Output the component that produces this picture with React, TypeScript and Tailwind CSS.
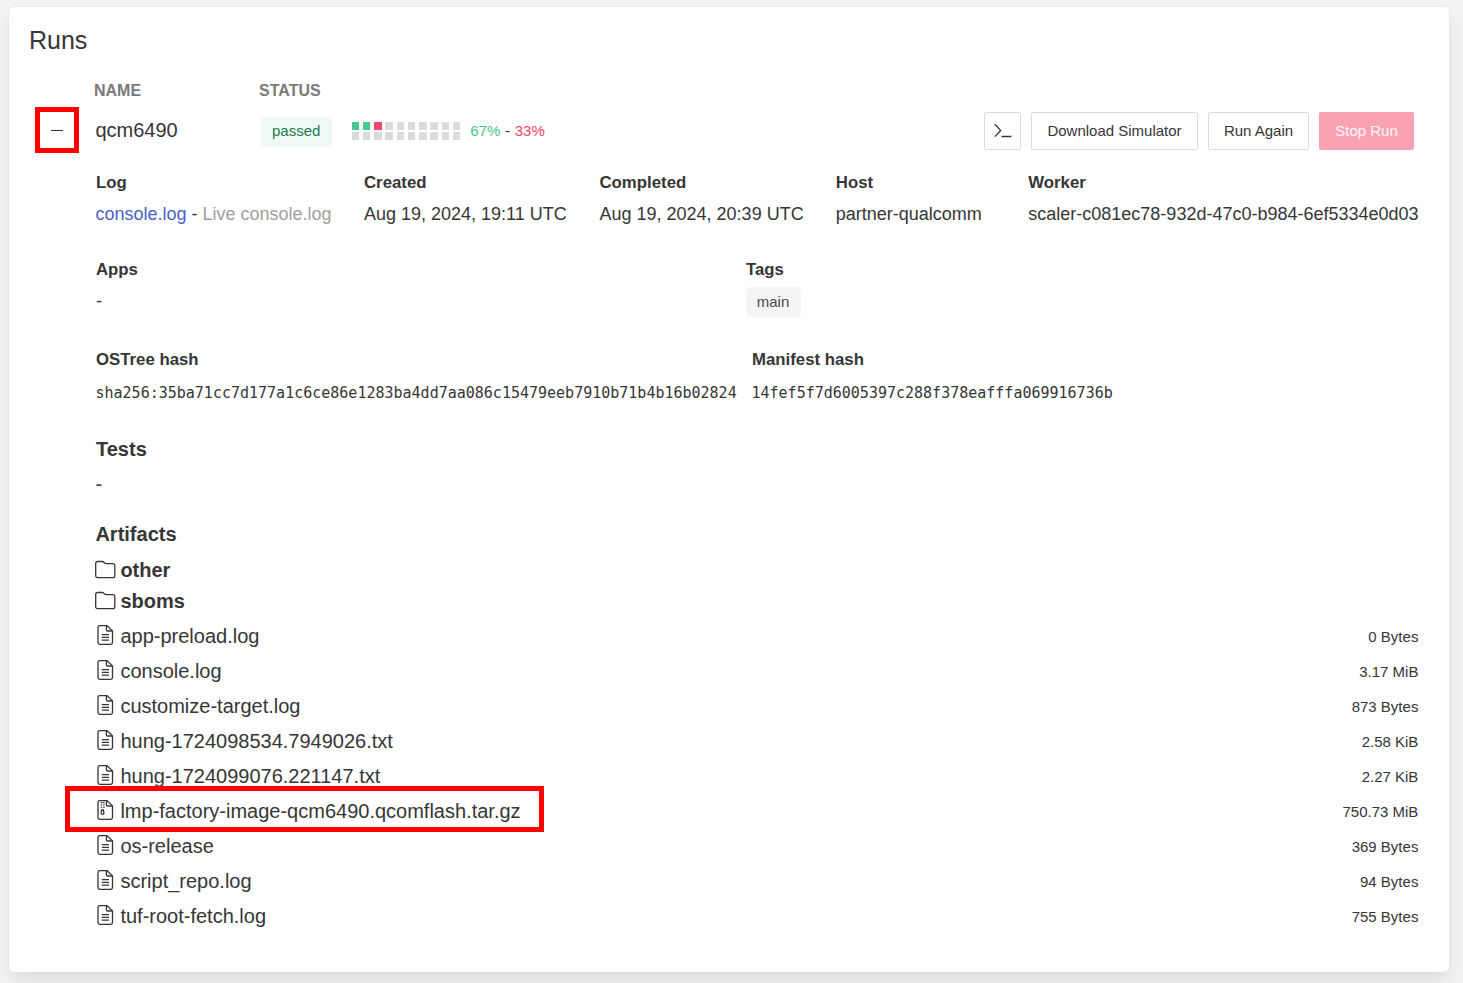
import React from "react";

const files = [
  { name: "app-preload.log", size: "0 Bytes" },
  { name: "console.log", size: "3.17 MiB" },
  { name: "customize-target.log", size: "873 Bytes" },
  { name: "hung-1724098534.7949026.txt", size: "2.58 KiB" },
  { name: "hung-1724099076.221147.txt", size: "2.27 KiB" },
  { name: "lmp-factory-image-qcm6490.qcomflash.tar.gz", size: "750.73 MiB", archive: true },
  { name: "os-release", size: "369 Bytes" },
  { name: "script_repo.log", size: "94 Bytes" },
  { name: "tuf-root-fetch.log", size: "755 Bytes" },
];

const cells = [
  "bg-[#48c78e]", "bg-[#48c78e]", "bg-[#f14668]",
  ...Array.from({ length: 17 }, () => "bg-[#dbdbdb]"),
];

function FolderIcon() {
  return (
    <svg className="block h-5 w-[21px] shrink-0" viewBox="0 0 21 20" fill="none" stroke="#363636" strokeWidth="1.3" strokeLinejoin="round">
      <path d="M.7 3.4a1.9 1.9 0 0 1 1.9-1.9h4.5c.7 0 1.2.2 1.7.7l.9.8c.5.4 1 .6 1.6.6h6.5a2 2 0 0 1 2 2v10.1a1.9 1.9 0 0 1-1.9 1.9H2.6a1.9 1.9 0 0 1-1.9-1.9z" />
    </svg>
  );
}

function FileIcon({ archive }: { archive?: boolean }) {
  return (
    <svg className="mb-px block h-5 w-[21px] shrink-0" viewBox="0 0 21 20" fill="none" stroke="#363636" strokeWidth="1.3" strokeLinejoin="round">
      <path d="M12.1.7H4.8A1.8 1.8 0 0 0 3 2.5v15a1.8 1.8 0 0 0 1.8 1.8h10.9a1.8 1.8 0 0 0 1.8-1.8V5.9z" />
      <path d="M11.4.8v3.9c0 .8.5 1.3 1.3 1.3h4.6" />
      {archive ? (
        <>
          <path d="M5.6 2.8h4M5.6 5h1.6M8 5h1.8M5.6 7.2h1.6M8 7.2h1.8" strokeWidth="1.1" />
          <path d="M6.7 10h1.6l.6 3a1.1 1.1 0 0 1-1.1 1.3h-.6A1.1 1.1 0 0 1 6.1 13z" />
        </>
      ) : (
        <path d="M6.8 9.6h7.2M6.8 12.4h7.2M6.8 15.2h7.2" />
      )}
    </svg>
  );
}

function Field({ label, className, children }: { label: string; className: string; children: React.ReactNode }) {
  return (
    <div className={"shrink-0 " + className}>
      <div className="h-8 pt-px text-[16.8px] leading-8 font-bold">{label}</div>
      {children}
    </div>
  );
}

export default function App() {
  return (
    <div className="h-[983px] overflow-hidden bg-[#f3f3f3] pt-[7px] pl-[9px] font-['Liberation_Sans',Arial,sans-serif] whitespace-nowrap text-[#363636]">
      <main className="h-[965px] w-[1440px] rounded-[5px] bg-white pt-[13px] pr-[31px] pl-5 shadow-[0_10px_20px_-2px_rgba(10,10,10,0.1),0_0_0_1px_rgba(10,10,10,0.02)]">
        <h1 className="h-14 text-[25px] leading-10">Runs</h1>
        <div className="flex h-[29px] pl-[65px] text-[16px] leading-[30px] font-bold text-[#7a7a7a]">
          <div className="w-[165px]">NAME</div>
          <div>STATUS</div>
        </div>

        <div className="flex h-[52px] items-center pl-[6px]">
          <button className="mr-4 mb-[2px] flex h-[46px] w-11 items-center justify-center border-[5px] border-[#ff0000]">
            <span className="h-px w-3 bg-[#363636]" />
          </button>
          <div className="mb-[2px] w-[166px] text-[20px]"><span className="pl-[0.4px]">qcm6490</span></div>
          <div className="mt-px flex h-[30px] w-[71px] items-center justify-center rounded-[4px] bg-[#effaf5] pr-[0.6px] pb-px text-[15px] text-[#257953]">passed</div>
          <div className="ml-[19.6px] grid grid-cols-10 gap-x-[3.75px] gap-y-[2px]">
            {cells.map((c, i) => (
              <span key={i} className={"h-2 w-[7.5px] " + c} />
            ))}
          </div>
          <div className="ml-[10px] text-[15px] [word-spacing:0.5px]">
            <span className="text-[#48c78e]">67%</span> - <span className="text-[#f14668]">33%</span>
          </div>
          <div className="mr-1 ml-auto flex gap-[10px] text-[15px]">
            <button className="flex h-[38px] w-[37px] items-center justify-center rounded-[2px] border border-[#dbdbdb]">
              <svg className="h-4 w-5" viewBox="0 0 20 16" fill="none" stroke="#363636" strokeWidth="1.4">
                <path d="M1.9 1.2l5.7 6.2-5.7 6.2M8.6 13.5h9.8" />
              </svg>
            </button>
            <button className="h-[38px] w-[167px] rounded-[2px] border border-[#dbdbdb]">Download Simulator</button>
            <button className="h-[38px] w-[101px] rounded-[2px] border border-[#dbdbdb]">Run Again</button>
            <button className="h-[38px] w-[95px] rounded-[2px] bg-[#f9a2b3] text-white/90">Stop Run</button>
          </div>
        </div>

        <div className="pl-[67px]">
          <div className="flex h-[87px] pt-[9px] text-[18px] leading-8">
            <Field label="Log" className="w-[268px]">
              <div className="-ml-[0.6px]">
                <span className="text-[#485fc7]">console.log</span> - <span className="text-[#a0a0a0]">Live console.log</span>
              </div>
            </Field>
            <Field label="Created" className="w-[235.5px]">Aug 19, 2024, 19:11 UTC</Field>
            <Field label="Completed" className="w-[236.3px]">Aug 19, 2024, 20:39 UTC</Field>
            <Field label="Host" className="w-[192.5px]">partner-qualcomm</Field>
            <Field label="Worker" className="">scaler-c081ec78-932d-47c0-b984-6ef5334e0d03</Field>
          </div>

          <div className="flex h-[90px] pt-[9px] text-[18px] leading-8">
            <Field label="Apps" className="w-[650px]">-</Field>
            <Field label="Tags" className="">
              <div className="mt-[2px] flex h-[30px] w-[55px] items-center justify-center rounded-[4px] bg-[#f5f5f5] pr-px text-[15px] text-[#4a4a4a]">main</div>
            </Field>
          </div>

          <div className="flex h-[97px] pt-[9px] text-[15px] leading-[34px]">
            <Field label="OSTree hash" className="w-[656px]">
              <div className="-ml-[0.5px] pt-px font-['DejaVu_Sans_Mono',monospace]">sha256:35ba71cc7d177a1c6ce86e1283ba4dd7aa086c15479eeb7910b71b4b16b02824</div>
            </Field>
            <Field label="Manifest hash" className="">
              <div className="-ml-[0.5px] pt-px font-['DejaVu_Sans_Mono',monospace]">14fef5f7d6005397c288f378eafffa069916736b</div>
            </Field>
          </div>

          <section className="h-[85px] text-[20px]">
            <h2 className="h-[35px] leading-9 font-bold">Tests</h2>
            <p className="-ml-[0.6px] leading-9">-</p>
          </section>

          <section className="relative -ml-[0.6px] text-[20px]">
            <h2 className="h-[38px] leading-9 font-bold">Artifacts</h2>
            {["other", "sboms"].map((f) => (
              <div key={f} className="flex h-[31px] items-center gap-1 font-bold">
                <FolderIcon />
                {f}
              </div>
            ))}
            <div className="pt-[2px]">
              {files.map((f) => (
                <div key={f.name} className="flex h-[35px] items-center gap-1">
                  <FileIcon archive={f.archive} />
                  <span>{f.name}</span>
                  <span className="mt-[3px] -mr-[0.4px] ml-auto text-[15px]">{f.size}</span>
                </div>
              ))}
            </div>
            <div className="pointer-events-none absolute top-[270px] -left-[30.4px] h-[46px] w-[479px] border-[5px] border-[#ff0000]" />
          </section>
        </div>
      </main>
    </div>
  );
}
